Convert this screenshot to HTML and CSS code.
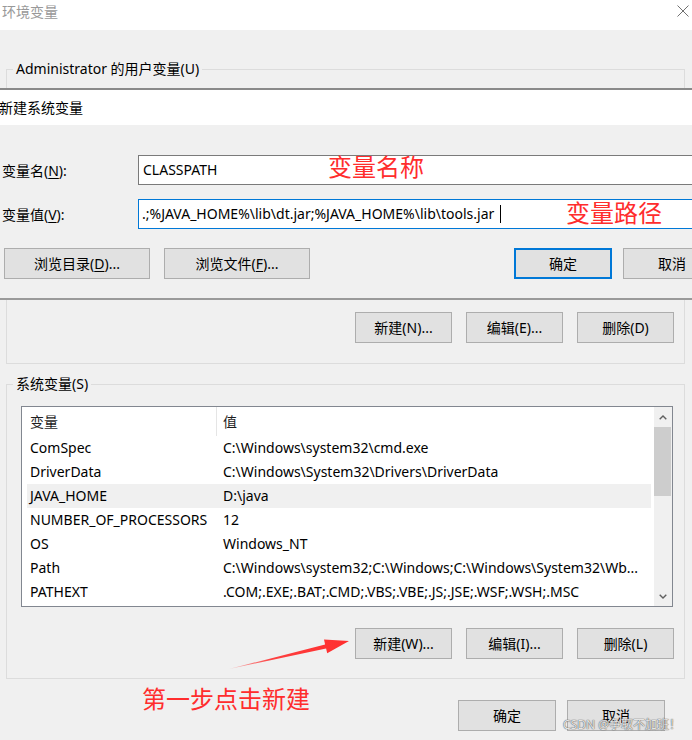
FILE: index.html
```html
<!DOCTYPE html>
<html lang="zh-CN">
<head>
<meta charset="utf-8">
<title>环境变量</title>
<link rel="stylesheet" href="styles.css">
</head>
<body>
<div class="window">
  <header class="titlebar">
    <span class="title">环境变量</span>
    <svg class="close" width="12" height="12" viewBox="0 0 12 12"><path d="M0.5 0.5L11.5 11.5M11.5 0.5L0.5 11.5" stroke="#707070" stroke-width="1" fill="none"/></svg>
  </header>

  <main class="content">
    <fieldset class="group group-user">
      <legend>Administrator 的用户变量(U)</legend>
      <div class="user-list"></div>
      <div class="group-buttons">
        <button class="btn">新建(N)...</button>
        <button class="btn">编辑(E)...</button>
        <button class="btn">删除(D)</button>
      </div>
    </fieldset>

    <fieldset class="group group-system">
      <legend>系统变量(S)</legend>
      <div class="listbox">
        <div class="list-main">
          <div class="list-header">
            <span class="col-name">变量</span>
            <span class="col-value">值</span>
          </div>
          <div class="list-row"><span class="col-name">ComSpec</span><span class="col-value">C:\Windows\system32\cmd.exe</span></div>
          <div class="list-row"><span class="col-name">DriverData</span><span class="col-value">C:\Windows\System32\Drivers\DriverData</span></div>
          <div class="list-row selected"><span class="col-name">JAVA_HOME</span><span class="col-value">D:\java</span></div>
          <div class="list-row"><span class="col-name">NUMBER_OF_PROCESSORS</span><span class="col-value">12</span></div>
          <div class="list-row"><span class="col-name">OS</span><span class="col-value">Windows_NT</span></div>
          <div class="list-row"><span class="col-name">Path</span><span class="col-value">C:\Windows\system32;C:\Windows;C:\Windows\System32\Wb...</span></div>
          <div class="list-row"><span class="col-name">PATHEXT</span><span class="col-value">.COM;.EXE;.BAT;.CMD;.VBS;.VBE;.JS;.JSE;.WSF;.WSH;.MSC</span></div>
        </div>
        <div class="scrollbar">
          <div class="sb-arrow"><svg width="8" height="5" viewBox="0 0 8 5"><path d="M0.7 4.3L4 1L7.3 4.3" stroke="#606060" stroke-width="1.4" fill="none"/></svg></div>
          <div class="sb-thumb"></div>
          <div class="sb-track"></div>
          <div class="sb-arrow"><svg width="8" height="5" viewBox="0 0 8 5"><path d="M0.7 0.7L4 4L7.3 0.7" stroke="#606060" stroke-width="1.4" fill="none"/></svg></div>
        </div>
      </div>
      <div class="group-buttons">
        <button class="btn">新建(W)...</button>
        <button class="btn">编辑(I)...</button>
        <button class="btn">删除(L)</button>
      </div>
    </fieldset>

    <div class="dialog-buttons">
      <button class="btn wide98">确定</button>
      <button class="btn wide98">取消</button>
    </div>
  </main>

  <section class="edit-dialog">
    <div class="edit-frame">
      <div class="edit-header">新建系统变量</div>
      <div class="edit-body">
        <div class="field-row">
          <label class="field-label">变量名(<u>N</u>):</label>
          <div class="field-input">CLASSPATH</div>
        </div>
        <div class="field-row">
          <label class="field-label">变量值(<u>V</u>):</label>
          <div class="field-input active">.;%JAVA_HOME%\lib\dt.jar;%JAVA_HOME%\lib\tools.jar<span class="caret"></span></div>
        </div>
        <div class="edit-buttons">
          <div class="btn-group left">
            <button class="btn wide">浏览目录(<u>D</u>)...</button>
            <button class="btn wide">浏览文件(<u>F</u>)...</button>
          </div>
          <div class="btn-group right">
            <button class="btn wide98 default">确定</button>
            <button class="btn wide98">取消</button>
          </div>
        </div>
      </div>
    </div>
  </section>

  <div class="note note-name">变量名称</div>
  <div class="note note-path">变量路径</div>
  <svg class="arrow" width="130" height="40" viewBox="0 0 130 40">
    <defs>
      <linearGradient id="arrowFade" x1="0" y1="0" x2="1" y2="0">
        <stop offset="0" stop-color="#ff2d2d" stop-opacity="0.25"/>
        <stop offset="0.35" stop-color="#ff2d2d" stop-opacity="0.9"/>
        <stop offset="1" stop-color="#ff2d2d"/>
      </linearGradient>
    </defs>
    <polygon points="4,34 100.1,9.5 99,4.6 124,6 102.2,18.2 101.1,13.4" fill="url(#arrowFade)"/>
  </svg>
  <div class="note note-step">第一步点击新建</div>
  <div class="watermark">CSDN @争取不加班！</div>
</div>
</body>
</html>
```

FILE: styles.css
```css
* { box-sizing: border-box; }
html, body { margin: 0; padding: 0; }
body {
  width: 692px;
  height: 740px;
  overflow: hidden;
  background: #f0f0f0;
  font-family: "Noto Sans", "Noto Sans CJK SC", sans-serif;
  font-size: 14px;
  color: #000;
}
.window {
  position: relative;
  width: 692px;
  height: 740px;
  overflow: hidden;
  background: #f0f0f0;
}

/* title bar */
.titlebar {
  height: 30px;
  background: #fff;
  display: flex;
  justify-content: space-between;
  align-items: flex-start;
}
.title {
  padding-left: 2px;
  line-height: 24px;
  color: #999;
}
.close { margin: 5px 3px 0 0; }

/* main content */
.content { padding-top: 29px; }

.group {
  margin: 0 7px 0 6px;
  padding: 0 10px 20px 6px;
  border: 1px solid #dcdcdc;
  min-width: 0;
}
.group legend {
  padding: 0 3px;
  line-height: 20px;
}
.user-list { margin-top: 12px; height: 200px; }

.group-buttons {
  display: flex;
  justify-content: flex-end;
  gap: 14px;
  margin-top: 21px;
}
.btn {
  width: 97px;
  height: 31px;
  padding: 0;
  background: #e1e1e1;
  border: 1px solid #adadad;
  font: inherit;
  color: #000;
  line-height: 29px;
  white-space: nowrap;
}
.btn u { text-underline-offset: 2px; }
.btn.wide { width: 146px; }
.btn.wide98 { width: 98px; }
.btn.default { border: 2px solid #0078d7; line-height: 27px; }

.group-system { margin-top: 10px; padding-bottom: 19px; }

/* list box */
.listbox {
  margin: 12px 0 0 8px;
  width: 652px;
  height: 201px;
  border: 1px solid #828790;
  background: #fff;
  display: flex;
}
.list-main { flex: 1; overflow: hidden; }
.list-header {
  height: 29px;
  display: grid;
  grid-template-columns: 195px 1fr;
  color: #1e1e1e;
}
.list-header span { line-height: 29px; }
.list-header .col-name { padding-left: 8px; border-right: 1px solid #e5e5e5; }
.list-header .col-value { padding-left: 6px; }
.list-row {
  height: 24px;
  margin: 0 3px 0 5px;
  display: grid;
  grid-template-columns: 189px 1fr;
  line-height: 24px;
  white-space: nowrap;
}
.list-row .col-name { padding-left: 3px; overflow: hidden; }
.list-row .col-value { padding-left: 7px; overflow: hidden; }
.list-row.selected { background: #f0f0f0; }

.scrollbar {
  width: 18px;
  background: #f0f0f0;
  display: flex;
  flex-direction: column;
}
.sb-arrow {
  width: 17px;
  height: 20px;
  display: flex;
  align-items: center;
  justify-content: center;
}
.sb-thumb { width: 17px; height: 69px; background: #cdcdcd; }
.sb-track { flex: 1; }

/* dialog buttons */
.dialog-buttons {
  display: flex;
  justify-content: flex-end;
  gap: 11px;
  margin: 21px 27px 0 0;
}

/* overlaid edit dialog */
.edit-dialog {
  position: absolute;
  left: 0;
  top: 88px;
  width: 692px;
  height: 212px;
  overflow: hidden;
  background: #f0f0f0;
  border-top: 2px solid #8a8a8a;
  border-bottom: 2px solid #9a9a9a;
}
.edit-frame { width: 740px; }
.edit-header {
  height: 35px;
  background: #fff;
  line-height: 35px;
  text-indent: -1px;
}
.edit-body { padding: 30px 19px 0 2px; }
.field-row {
  display: grid;
  grid-template-columns: 136px 1fr;
  align-items: center;
  height: 30px;
}
.field-row + .field-row { margin-top: 14px; }
.field-label u { text-underline-offset: 2px; }
.field-input {
  height: 30px;
  border: 1px solid #7a7a7a;
  background: #fff;
  padding-left: 4px;
  line-height: 28px;
  white-space: nowrap;
  display: flex;
  align-items: center;
}
.field-input.active { border-color: #0078d7; padding-left: 3px; }
.caret {
  display: inline-block;
  width: 1px;
  height: 18px;
  margin-left: 6px;
  background: #000;
}
.edit-buttons {
  display: flex;
  justify-content: space-between;
  margin-top: 19px;
  padding-left: 2px;
}
.btn-group { display: flex; }
.btn-group.left { gap: 14px; }
.btn-group.right { gap: 11px; }

/* annotations */
.note {
  position: absolute;
  color: #ff2d2d;
  font-family: "Noto Sans CJK SC", sans-serif;
  font-size: 24px;
  line-height: 28px;
  white-space: nowrap;
}
.note-name { left: 328px; top: 152px; }
.note-path { left: 566px; top: 198px; }
.note-step { left: 142px; top: 684px; }
.arrow { position: absolute; left: 225px; top: 635px; }
.watermark {
  position: absolute;
  left: 563px;
  top: 717px;
  font-size: 12px;
  line-height: 16px;
  white-space: nowrap;
  color: rgba(255, 255, 255, 0.85);
  text-shadow: 0 0 1px #555, 0 0 1px #555;
}
```
